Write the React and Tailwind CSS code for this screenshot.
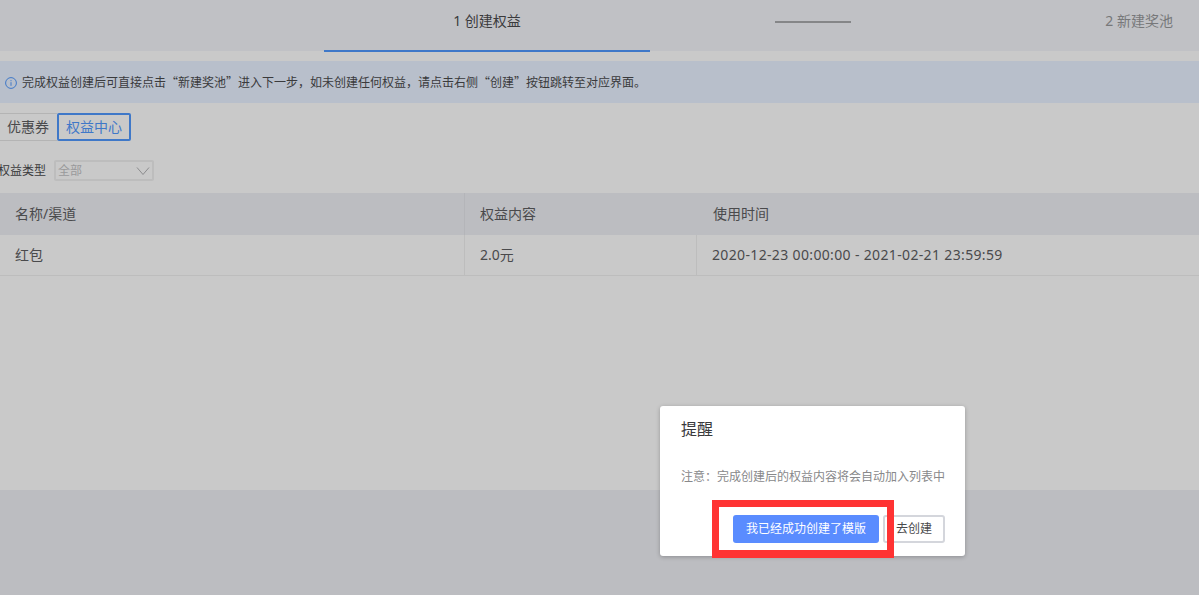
export default function App() {
  return (
    <div className="relative h-[595px] w-[1199px] overflow-hidden bg-[#bcbdc1] font-['Noto_Sans','Noto_Sans_CJK_SC',sans-serif] text-sm text-[#4a4a4c]">
      <div className="h-[490px] bg-[#c9c9c9]">
        {/* Steps */}
        <div className="flex h-[51px] items-stretch bg-[#c0c1c5] pl-[324px]">
          <div className="flex h-[52px] w-[326px] items-center justify-center border-b-2 border-[#3f78c8] pb-[9px] text-[#3a3a3c]">1 创建权益</div>
          <div className="ml-[125px] mt-[21px] h-[2px] w-[76px] bg-[#858688]"></div>
          <div className="ml-auto flex items-center pb-[9px] pr-[26px] text-[#77787a]">2 新建奖池</div>
        </div>

        {/* Notice */}
        <div className="mt-[10px] flex h-[42px] items-center gap-[5px] bg-[#b8bfcb] pl-[5px] font-['Noto_Sans_CJK_SC',sans-serif] text-xs text-[#3a3a3c]">
          <svg className="mt-[2px] h-3 w-3 shrink-0" viewBox="0 0 12 12" fill="none" stroke="#3f78c8" strokeWidth="1">
            <circle cx="6" cy="6" r="5.4" />
            <path d="M6 5.2v3.6M6 3.2v1" />
          </svg>
          <span>完成权益创建后可直接点击“新建奖池”进入下一步，如未创建任何权益，请点击右侧“创建”按钮跳转至对应界面。</span>
        </div>

        {/* Tabs */}
        <div className="mt-[10px] flex h-7 -ml-[10px]">
          <div className="flex w-[67px] items-center justify-end rounded-l-[2px] border border-r-0 border-[#b4b4b4] pr-2">优惠券</div>
          <div className="flex w-[74px] items-center justify-center rounded-[2px] border-2 border-[#3f78c8] text-[#3f78c8]">权益中心</div>
        </div>

        {/* Filter */}
        <div className="mt-[19px] flex h-[21px] items-center">
          <span className="-ml-[2px] w-[56px] text-xs text-[#3a3a3c]">权益类型</span>
          <div className="flex h-[21px] w-[100px] items-center justify-between rounded-[2px] border-2 border-[#bdbdbd] pl-[2px] pr-[2px] text-xs text-[#99999b]">
            <span>全部</span>
            <svg className="h-[10px] w-[14px]" viewBox="0 0 14 10" fill="none" stroke="#8c8c8e" strokeWidth="1">
              <path d="M1 1.5l6 7 6-7" />
            </svg>
          </div>
        </div>

        {/* Table */}
        <div className="mt-3 grid grid-cols-[464px_232px_1fr]">
          <div className="flex h-[42px] items-center bg-[#bcbdc1] pl-[15px]">名称/渠道</div>
          <div className="flex h-[42px] items-center border-l border-[#b4b5b9] bg-[#bcbdc1] pl-[15px]">权益内容</div>
          <div className="flex h-[42px] items-center bg-[#bcbdc1] pl-[17px]">使用时间</div>
          <div className="flex h-[41px] items-center border-b border-[#bdbdbd] pl-[15px]">红包</div>
          <div className="flex h-[41px] items-center border-b border-l border-[#bdbdbd] pl-[15px]">2.0元</div>
          <div className="flex h-[41px] items-center border-b border-l border-[#bdbdbd] pl-[15px] tracking-[0.35px]">2020-12-23 00:00:00 - 2021-02-21 23:59:59</div>
        </div>
      </div>

      {/* Dialog */}
      <div className="absolute left-[660px] top-[406px] h-[150px] w-[305px] rounded-[3px] bg-white pl-[21px] pr-[20px] shadow-[0_1px_4px_rgba(0,0,0,0.25)]">
        <div className="mt-[12px] text-base leading-[22px] text-[#3a3a3c]">提醒</div>
        <div className="mt-[28px] text-xs leading-[18px] whitespace-nowrap text-[#88888a]">注意：完成创建后的权益内容将会自动加入列表中</div>
        <div className="mt-[29px] flex justify-end gap-1">
          <button className="h-7 w-[146px] rounded-[3px] bg-[#5a8cff] text-xs text-white">我已经成功创建了模版</button>
          <button className="h-7 w-[62px] rounded-[3px] border-2 border-[#d4d6dc] bg-white text-xs text-[#4a4a4c]">去创建</button>
        </div>
      </div>

      {/* Annotation */}
      <div className="absolute left-[712px] top-[500px] h-[58px] w-[182px] border-[7px] border-b-8 border-[#ff3333]"></div>
    </div>
  );
}
